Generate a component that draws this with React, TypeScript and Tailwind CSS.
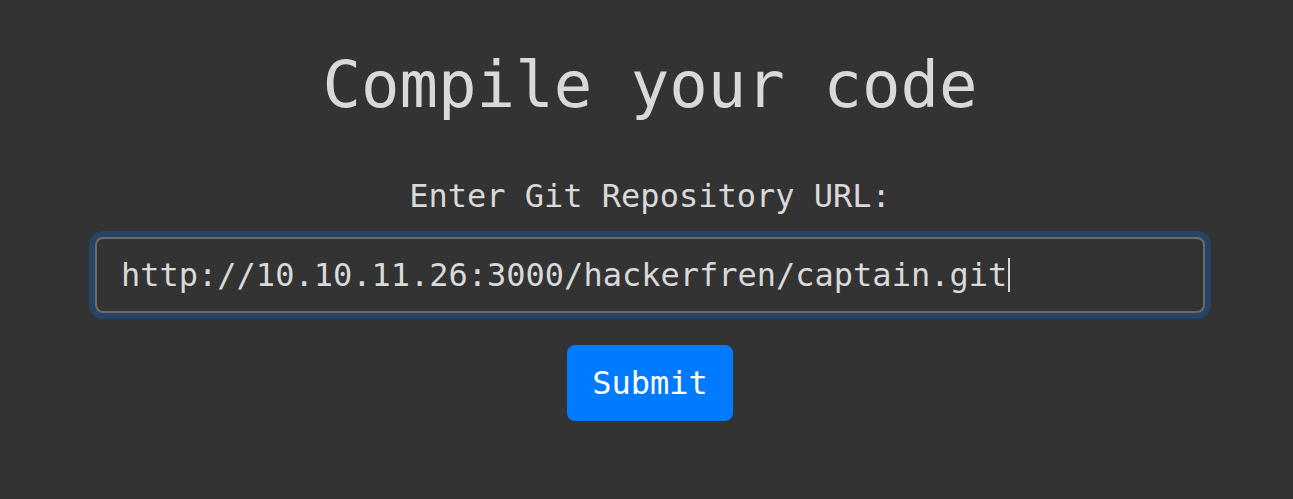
export default function App() {
  return (
    <div
      className="min-h-[499px] w-full bg-[#333333] text-[#d9d9d9]"
      style={{ fontFamily: '"DejaVu Sans Mono", "Liberation Mono", monospace' }}
    >
      <div className="ml-[95px] flex w-[1110px] flex-col items-center pt-[47px]">
        <h1 className="text-[64px] leading-[76.8px] font-normal text-[#d9d9d9]">Compile your code</h1>
        <label className="mt-[48px] text-[32px] leading-[48px] text-[#d9d9d9]">Enter Git Repository URL:</label>
        <div className="mt-[17px] flex h-[76px] w-full items-center rounded-[8px] border-2 border-[#6b6b6b] bg-[#333333] px-[24px] text-[32px] leading-[48px] text-[#d9d9d9] shadow-[0_0_0_6px_#264566]">
          <span>http://10.10.11.26:3000/hackerfren/captain.git</span>
          <span className="ml-[1px] inline-block h-[34px] w-[2px] bg-[#d9d9d9]" />
        </div>
        <button className="mt-[32px] h-[76px] w-[166px] rounded-[8px] border-2 border-[#007bff] bg-[#007bff] text-[32px] leading-[48px] text-white">
          Submit
        </button>
      </div>
    </div>
  );
}
